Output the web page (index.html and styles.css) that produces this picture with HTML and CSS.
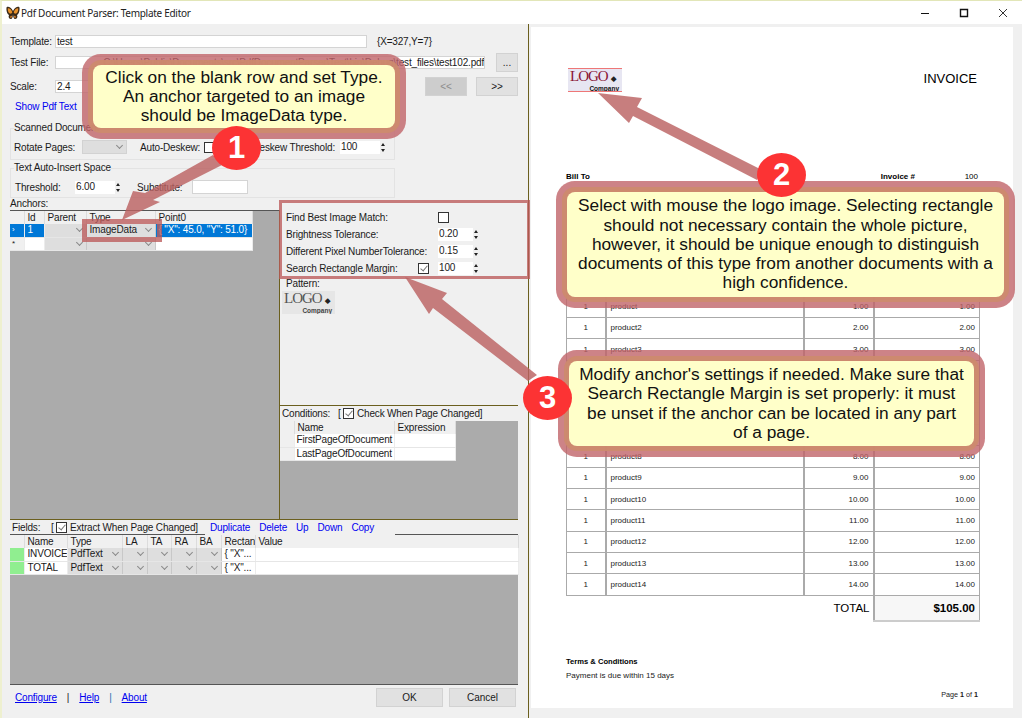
FILE: index.html
```html
<!DOCTYPE html>
<html lang="en">
  <head>
    <meta charset="UTF-8" />
    <title>Pdf Document Parser: Template Editor</title>
    <link rel="stylesheet" href="styles.css">
  </head>
  <body>
    <div class="window">
      <header class="titlebar">
        <svg class="app-icon" viewBox="0 0 14 14">
          <path d="M7 5C5 1 2 0 .6 1.2 0 4 1 8 3 9c-1 2 0 4 2 4 1 0 2-2 2-5 0 3 1 5 2 5 2 0 3-2 2-4 2-1 3-5 2.400-7.800C12 0 9 1 7 5z" fill="#3a2a18"/>
          <path d="M6.300 6C5 3 3 2 1.800 2.400 1.600 4.500 2.500 7 4 7.600 5 8 6 7.500 6.300 6zM7.700 6C9 3 11 2 12.200 2.400 12.400 4.500 11.500 7 10 7.600 9 8 8 7.500 7.700 6z" fill="#e8912a"/>
          <path d="M4.500 10c-.6 1-.3 2 .5 2 .5 0 1-1 1.100-2.200zM9.500 10c.6 1 .3 2-.5 2-.5 0-1-1-1.100-2.200z" fill="#d9822b"/>
        </svg>
        <span class="title">Pdf Document Parser: Template Editor</span>
        <div class="win-buttons">
          <svg viewBox="0 0 10 10"><path d="M1 5.500h8" stroke="#111" fill="none"/></svg>
          <svg viewBox="0 0 10 10"><path d="M1.500 1.500h7v7h-7z" stroke="#111" stroke-width="1.400" fill="none"/></svg>
          <svg viewBox="0 0 10 10"><path d="M1 1l8 8M9 1l-8 8" stroke="#333" fill="none"/></svg>
        </div>
      </header>

      <div class="body">
        <section class="editor">
          <div class="row row-template">
            <span class="lbl">Template:</span>
            <div class="input input-template">test</div>
            <span class="coords">{X=327,Y=7}</span>
          </div>
          <div class="row row-tall">
            <span class="lbl">Test File:</span>
            <div class="input input-file">C:\Users\Public\Documents\src\PdfDocumentParser\Test\bin\Debug\test_files\test102.pdf</div>
            <button class="btn btn-browse">...</button>
          </div>
          <div class="row row-tall">
            <span class="lbl">Scale:</span>
            <div class="input input-scale">2.4</div>
            <button class="btn btn-nav btn-off">&lt;&lt;</button>
            <button class="btn btn-nav">&gt;&gt;</button>
          </div>
          <a class="link show-text">Show Pdf Text</a>

          <fieldset class="group group-scan">
            <legend>Scanned Document</legend>
            <div class="row">
              <span class="lbl-rotate">Rotate Pages:</span>
              <div class="combo combo-rotate"></div>
              <span class="lbl-deskew">Auto-Deskew:</span>
              <span class="chk"></span>
              <span class="lbl-threshold">Deskew Threshold:</span>
              <div class="num num-deskew"><span>100</span><i class="spin"></i></div>
            </div>
          </fieldset>
          <fieldset class="group group-space">
            <legend>Text Auto-Insert Space</legend>
            <div class="row">
              <span class="lbl-space">Threshold:</span>
              <div class="num num-space"><span>6.00</span><i class="spin"></i></div>
              <span class="lbl-subst">Substitute:</span>
              <div class="input input-subst"></div>
            </div>
          </fieldset>

          <div class="anchors-label">Anchors:</div>
          <div class="split">
            <div class="pane-anchors">
              <table class="grid grid-anchors">
                <tr>
                  <th class="c-head"></th><th class="c-id">Id</th><th class="c-parent">Parent</th><th class="c-type">Type</th><th class="c-point">Point0</th>
                </tr>
                <tr class="selected">
                  <td class="rowhead">&#8250;</td><td>1</td><td class="cell-combo"></td><td class="cell-combo">ImageData</td><td>{ "X": 45.0, "Y": 51.0}</td>
                </tr>
                <tr>
                  <td class="rowhead">*</td><td></td><td class="cell-combo"></td><td class="cell-combo"></td><td></td>
                </tr>
              </table>
            </div>
            <div class="pane-side">
              <div class="settings">
                <div class="row row-set"><span class="lbl-set">Find Best Image Match:</span><span class="chk"></span></div>
                <div class="row row-set"><span class="lbl-set">Brightness Tolerance:</span><div class="num num-set"><span>0.20</span><i class="spin"></i></div></div>
                <div class="row row-set"><span class="lbl-set">Different Pixel NumberTolerance:</span><div class="num num-set"><span>0.15</span><i class="spin"></i></div></div>
                <div class="row row-set"><span class="lbl-margin">Search Rectangle Margin:</span><span class="chk chk-on chk-margin"></span><div class="num num-set"><span>100</span><i class="spin"></i></div></div>
                <div class="pattern-label">Pattern:</div>
                <div class="logo logo-pattern"><span class="logo-word">LOGO<b>&#9670;</b></span><span class="logo-sub">Company</span></div>
              </div>
              <div class="conditions">
                <div class="row cond-head">
                  <span class="lbl-cond">Conditions:</span><span class="bracket">[</span><span class="chk chk-on"></span><span class="cond-check">Check When Page Changed]</span>
                </div>
                <div class="cond-body">
                  <table class="grid grid-cond">
                    <tr><th class="c-head"></th><th class="c-cname">Name</th><th class="c-expr">Expression</th></tr>
                    <tr><td class="rowhead"></td><td class="tight">FirstPageOfDocument</td><td></td></tr>
                    <tr><td class="rowhead"></td><td class="tight">LastPageOfDocument</td><td></td></tr>
                  </table>
                </div>
              </div>
            </div>
          </div>

          <div class="row fields-head">
            <span class="lbl-fields">Fields:</span><span class="bracket">[</span><span class="chk chk-on"></span><span class="fields-check">Extract When Page Changed]</span>
            <div class="fields-links">
              <a class="link">Duplicate</a><a class="link">Delete</a><a class="link">Up</a><a class="link">Down</a><a class="link">Copy</a>
            </div>
          </div>
          <div class="fields-body">
            <table class="grid grid-fields">
              <tr>
                <th class="c-head"></th><th class="c-fname">Name</th><th class="c-ftype">Type</th><th class="c-la">LA</th><th class="c-ta">TA</th><th class="c-ra">RA</th><th class="c-ba">BA</th><th class="c-rect">Rectan</th><th class="c-value">Value</th>
              </tr>
              <tr>
                <td class="rowhead green"></td><td>INVOICE</td><td class="cell-combo">PdfText</td><td class="cell-combo"></td><td class="cell-combo"></td><td class="cell-combo"></td><td class="cell-combo"></td><td>{ "X"...</td><td></td>
              </tr>
              <tr>
                <td class="rowhead green"></td><td>TOTAL</td><td class="cell-combo">PdfText</td><td class="cell-combo"></td><td class="cell-combo"></td><td class="cell-combo"></td><td class="cell-combo"></td><td>{ "X"...</td><td></td>
              </tr>
            </table>
          </div>

          <footer class="footer">
            <a class="link under">Configure</a><span class="sep">|</span><a class="link under">Help</a><span class="sep sep-blue">|</span><a class="link under">About</a>
            <button class="btn btn-ok">OK</button>
            <button class="btn btn-cancel">Cancel</button>
          </footer>
        </section>

        <section class="viewer">
          <div class="page">
            <div class="doc-top">
              <div class="logo logo-doc"><span class="logo-word">LOGO<b>&#9670;</b></span><span class="logo-sub">Company</span></div>
              <div class="doc-title">INVOICE</div>
            </div>
            <div class="bill-row">
              <b>Bill To</b>
              <b class="inv-label">Invoice #</b>
              <span class="inv-value">100</span>
            </div>
            <table class="items">
              <tr class="items-head"><td class="q">Qty</td><td>Description</td><td class="m">Price</td><td class="m">Amount</td></tr>
              <tr><td class="q">1</td><td>product</td><td class="m">1.00</td><td class="m">1.00</td></tr>
              <tr><td class="q">1</td><td>product2</td><td class="m">2.00</td><td class="m">2.00</td></tr>
              <tr><td class="q">1</td><td>product3</td><td class="m">3.00</td><td class="m">3.00</td></tr>
              <tr><td class="q">1</td><td>product4</td><td class="m">4.00</td><td class="m">4.00</td></tr>
              <tr><td class="q">1</td><td>product5</td><td class="m">5.00</td><td class="m">5.00</td></tr>
              <tr><td class="q">1</td><td>product6</td><td class="m">6.00</td><td class="m">6.00</td></tr>
              <tr><td class="q">1</td><td>product7</td><td class="m">7.00</td><td class="m">7.00</td></tr>
              <tr><td class="q">1</td><td>product8</td><td class="m">8.00</td><td class="m">8.00</td></tr>
              <tr><td class="q">1</td><td>product9</td><td class="m">9.00</td><td class="m">9.00</td></tr>
              <tr><td class="q">1</td><td>product10</td><td class="m">10.00</td><td class="m">10.00</td></tr>
              <tr><td class="q">1</td><td>product11</td><td class="m">11.00</td><td class="m">11.00</td></tr>
              <tr><td class="q">1</td><td>product12</td><td class="m">12.00</td><td class="m">12.00</td></tr>
              <tr><td class="q">1</td><td>product13</td><td class="m">13.00</td><td class="m">13.00</td></tr>
              <tr><td class="q">1</td><td>product14</td><td class="m">14.00</td><td class="m">14.00</td></tr>
              <tr class="items-total"><td colspan="3" class="total-label">TOTAL</td><td class="total-value">$105.00</td></tr>
            </table>
            <div class="terms">Terms &amp; Conditions</div>
            <div class="payment">Payment is due within 15 days</div>
            <div class="page-no">Page <b>1</b> of <b>1</b></div>
          </div>
        </section>
      </div>

      <!-- tutorial marks drawn over the screenshot -->
      <div class="notes">
        <svg class="marks" viewBox="0 0 1022 718">
          <rect class="mark-box mark-type" x="84.500" y="221.500" width="75" height="18"/>
          <rect class="mark-box" x="280.500" y="201.500" width="248" height="76"/>
          <polygon class="mark-arrow" points="122,220 133,191 145,193 213,155 222,165 153,200 160,202"/>
          <polygon class="mark-arrow" points="598,93 642,98 637,107 762,170 757,180 633,116 629,123"/>
          <polygon class="mark-arrow" points="405,277 447,293 442,299 537,375 528,381 433,308 429,314"/>
        </svg>
        <div class="callout callout-1">Click on the blank row and set Type.<br>An anchor targeted to an image<br>should be ImageData type.</div>
        <div class="callout callout-2">Select with mouse the logo image. Selecting rectangle<br>should not necessary contain the whole picture,<br>however, it should be unique enough to distinguish<br>documents of this type from another documents with a<br>high confidence.</div>
        <div class="callout callout-3">Modify anchor's settings if needed. Make sure that<br>Search Rectangle Margin is set properly: it must<br>be unset if the anchor can be located in any part<br>of a page.</div>
        <div class="badge badge-1">1</div>
        <div class="badge badge-2">2</div>
        <div class="badge badge-3">3</div>
      </div>
    </div>
  </body>
</html>
```

FILE: styles.css
```css
html,
body {
  margin: 0;
  height: 100%;
}
body {
  font-family: "Liberation Sans", Arial, sans-serif;
  font-size: 10px;
  letter-spacing: -.17px;
  color: #1a1a1a;
  background: #f0f0f0;
  white-space: nowrap;
}
.window {
  position: relative;
  display: flex;
  flex-direction: column;
  width: 1022px;
  height: 718px;
  box-sizing: border-box;
  border-top: 1px solid #e2e6b8;
  border-left: 2px solid #eef0cf;
  overflow: hidden;
}

/* title bar */
.titlebar {
  display: flex;
  align-items: center;
  flex: none;
  height: 23px;
  background: #fff;
}
.app-icon {
  width: 14px;
  height: 14px;
  margin-left: 4px;
}
.title {
  margin-left: 1px;
  font-family: "Noto Sans", sans-serif;
  font-size: 10px;
  letter-spacing: -.28px;
  color: #222;
}
.win-buttons {
  display: flex;
  gap: 29px;
  margin-left: auto;
  margin-right: 14px;
}
.win-buttons svg {
  width: 10px;
  height: 10px;
}

.body {
  display: flex;
  flex: 1;
  min-height: 0;
}

/* left side */
.editor {
  flex: none;
  width: 508px;
  padding: 11px 10px 0 8px;
  border-right: 1px solid #6b5f1e;
}
.row {
  display: flex;
  align-items: center;
}
.row-template {
  height: 13px;
}
.row-tall {
  height: 19px;
  margin-top: 5px;
}
.lbl {
  flex: none;
  width: 45px;
}
.input {
  box-sizing: border-box;
  height: 13px;
  padding-left: 1px;
  line-height: 12px;
  background: #fff;
  border: 1px solid #d4d4d4;
  overflow: hidden;
}
.input-template {
  width: 312px;
}
.coords {
  margin-left: 10px;
}
.input-file {
  width: 431px;
  text-align: right;
}
.input-scale {
  width: 100px;
}
.btn {
  box-sizing: border-box;
  padding: 0;
  font-family: inherit;
  font-size: 10px;
  color: #1a1a1a;
  background: #e1e1e1;
  border: 1px solid #d2d2d2;
}
.btn-browse {
  width: 22px;
  height: 19px;
  margin-left: 11px;
}
.btn-nav {
  width: 42px;
  height: 19px;
  margin-left: 9px;
}
.btn-nav.btn-off {
  margin-left: auto;
  color: #8c8c8c;
  background: #cdcdcd;
}
.link {
  color: #0000f0;
}
.show-text {
  display: block;
  margin: 5px 0 0 5px;
  line-height: 12px;
}

.group {
  box-sizing: border-box;
  width: 385px;
  margin: 9px 0 0;
  padding: 0;
  border: 1px solid #e3e3e3;
  min-inline-size: 0;
}
.group legend {
  margin-left: 3px;
  padding: 0;
  line-height: 12px;
}
.group .row {
  height: 14px;
  margin-top: 6px;
}
.group-scan {
  height: 38px;
}
.group-space {
  height: 36px;
  margin-top: 2px;
}
.lbl-rotate {
  width: 71px;
  padding-left: 3px;
  box-sizing: border-box;
  flex: none;
}
.combo {
  position: relative;
  flex: none;
  box-sizing: border-box;
  width: 45px;
  height: 14px;
  background: #dedede;
  border: 1px solid #d2d2d2;
}
.combo::after,
.cell-combo::after {
  content: "";
  position: absolute;
  top: 50%;
  right: 4px;
  width: 4px;
  height: 4px;
  margin-top: -4px;
  border-right: 1px solid #8a8a8a;
  border-bottom: 1px solid #8a8a8a;
  transform: rotate(45deg);
}
.lbl-deskew {
  flex: none;
  width: 64px;
  margin-left: 13px;
}
.lbl-threshold {
  flex: none;
  width: 120px;
  text-align: right;
}
.lbl-space {
  flex: none;
  box-sizing: border-box;
  width: 64px;
  padding-left: 4px;
}
.lbl-subst {
  flex: none;
  width: 55px;
  margin-left: 15px;
}
.input-subst {
  width: 56px;
  height: 14px;
}
.num {
  display: flex;
  flex: none;
  align-items: center;
  justify-content: space-between;
  height: 13px;
  padding-left: 1px;
  line-height: 12px;
  background: #fff;
}
.num-deskew {
  width: 46px;
  margin-left: 5px;
}
.num-space {
  width: 46px;
}
.num-set {
  width: 41px;
}
.spin {
  position: relative;
  flex: none;
  width: 7px;
  height: 13px;
  background: #f0f0f0;
}
.spin::before,
.spin::after {
  content: "";
  position: absolute;
  left: 1px;
  border-left: 2.500px solid transparent;
  border-right: 2.500px solid transparent;
}
.spin::before {
  top: 2px;
  border-bottom: 3px solid #222;
}
.spin::after {
  bottom: 2px;
  border-top: 3px solid #222;
}
.chk {
  position: relative;
  flex: none;
  box-sizing: border-box;
  width: 11px;
  height: 11px;
  background: #fff;
  border: 1px solid #333;
}
.chk-on::after {
  content: "";
  position: absolute;
  left: 3px;
  top: 0;
  width: 3px;
  height: 6px;
  border-right: 1px solid #777;
  border-bottom: 1px solid #777;
  transform: rotate(40deg);
}

.anchors-label {
  height: 12px;
  line-height: 12px;
}
.split {
  display: flex;
  height: 310px;
  box-sizing: border-box;
  border-bottom: 1px solid #6b5f1e;
}
.pane-anchors {
  flex: none;
  width: 270px;
  box-sizing: border-box;
  background: #ababab;
  border-top: 1px solid #555;
  border-right: 1px solid #6b5f1e;
}
.pane-side {
  display: flex;
  flex: 1;
  flex-direction: column;
}

/* grids */
.grid {
  border-collapse: collapse;
  table-layout: fixed;
  font-size: 10px;
}
.grid th,
.grid td {
  position: relative;
  box-sizing: border-box;
  height: 13px;
  padding: 0 0 0 3px;
  font-weight: 400;
  line-height: 12px;
  text-align: left;
  overflow: hidden;
}
.grid th {
  background: #f0f0f0;
  border-right: 1px solid #dcdcdc;
}
.grid td {
  background: #fff;
  border-right: 1px solid #ececec;
  border-bottom: 1px solid #e6e6e6;
}
.grid .rowhead {
  padding: 0 0 0 2px;
  font-size: 8px;
  background: #f0f0f0;
}
.grid .cell-combo {
  background: #dedede;
  border-right: 1px solid #c8c8c8;
}
.grid .green {
  background: #90ee90;
}
.grid .tight {
  padding-left: 2px;
}
.grid-anchors {
  width: 242px;
}
.c-head {
  width: 14px;
}
.c-id {
  width: 20px;
}
.c-parent {
  width: 42px;
}
.c-type {
  width: 69px;
}
.c-point {
  width: 97px;
}
.selected td,
.grid .selected .rowhead {
  color: #fff;
  background: #0078d7;
}
.grid .selected .cell-combo {
  color: #1a1a1a;
  background: #dedede;
}

.settings {
  flex: none;
  box-sizing: border-box;
  height: 196px;
  padding-left: 6px;
  border-bottom: 1px solid #6b5f1e;
}
.row-set {
  height: 14px;
  margin-bottom: 3px;
}
.lbl-set {
  flex: none;
  width: 152px;
}
.lbl-margin {
  flex: none;
  width: 132px;
}
.chk-margin {
  margin-right: 9px;
}
.pattern-label {
  height: 12px;
  line-height: 12px;
}
.logo {
  display: flex;
  flex-direction: column;
  box-sizing: border-box;
  width: 53px;
  height: 23px;
  overflow: hidden;
}
.logo-word {
  font-family: "Liberation Serif", serif;
  letter-spacing: -1px;
  line-height: 15px;
}
.logo-word b {
  margin-left: 3px;
  font-size: 7px;
  color: #222;
}
.logo-sub {
  margin-top: -2px;
  padding-right: 3px;
  font-size: 6.500px;
  font-weight: 700;
  letter-spacing: 0;
  line-height: 7px;
  text-align: right;
}
.logo-pattern {
  margin: 1px 0 0 -4px;
  padding-left: 2px;
  font-size: 15px;
  color: #555;
  background: #e6e6e6;
}
.logo-pattern .logo-sub {
  color: #444;
}
.conditions {
  display: flex;
  flex: 1;
  flex-direction: column;
}
.cond-head {
  flex: none;
  height: 15px;
  padding-left: 2px;
}
.lbl-cond {
  flex: none;
  width: 56px;
}
.bracket {
  flex: none;
  width: 5px;
}
.cond-check {
  margin-left: 3px;
}
.cond-body {
  flex: 1;
  background: #ababab;
}
.grid-cond {
  width: 175px;
}
.c-cname {
  width: 100px;
}
.c-expr {
  width: 61px;
}

.fields-head {
  position: relative;
  height: 15px;
  margin-bottom: -1px;
  padding-left: 2px;
}
.lbl-fields {
  flex: none;
  width: 39px;
}
.fields-check {
  flex: none;
  width: 126px;
  margin-left: 3px;
}
.fields-links {
  display: flex;
  gap: 9px;
  align-self: stretch;
  align-items: center;
  width: 190px;
  margin-left: 9px;
  padding-left: 5px;
  box-sizing: border-box;
  background: #f0f0f0;
}
.fields-body {
  height: 151px;
  box-sizing: border-box;
  background: #ababab;
  border-top: 1px solid #555;
  border-bottom: 1px solid #555;
}
.grid-fields {
  width: 508px;
}
.c-fname {
  width: 43px;
}
.c-ftype {
  width: 55px;
}
.c-la,
.c-ra,
.c-ba {
  width: 25px;
}
.c-ta {
  width: 24px;
}
.c-rect {
  width: 34px;
}
.c-value {
  width: 263px;
}

.footer {
  display: flex;
  align-items: center;
  height: 24px;
  padding-left: 5px;
}
.under {
  text-decoration: underline;
}
.sep {
  margin: 0 10px;
}
.sep-blue {
  color: #2a6fb0;
}
.btn-ok,
.btn-cancel {
  width: 67px;
  height: 19px;
}
.btn-ok {
  margin-left: auto;
}
.btn-cancel {
  margin: 0 2px 0 6px;
}

/* pdf preview */
.viewer {
  flex: 1;
  padding: 3px 9px 10px 2px;
}
.page {
  box-sizing: border-box;
  height: 681px;
  padding: 41px 33px 0 35px;
  background: #fff;
  font-size: 8px;
  letter-spacing: 0;
}
.doc-top {
  display: flex;
  align-items: flex-start;
  justify-content: space-between;
}
.logo-doc {
  width: 54px;
  height: 24px;
  margin-left: 2px;
  padding-left: 2px;
  font-size: 15px;
  color: #8a1434;
  background: #e7e6f2;
  border-top: 1px solid #e77;
  border-bottom: 1px solid #e77;
}
.logo-doc .logo-sub {
  color: #111;
}
.doc-title {
  margin-top: 3px;
  margin-right: 3px;
  font-size: 13px;
  line-height: 15px;
  color: #000;
}
.bill-row {
  display: flex;
  margin-top: 79px;
  line-height: 11px;
  color: #000;
}
.inv-label {
  margin-left: auto;
}
.inv-value {
  width: 65px;
  padding-right: 2px;
  box-sizing: border-box;
  text-align: right;
}
.items {
  width: 414px;
  margin-top: 92px;
  border-collapse: collapse;
  table-layout: fixed;
  color: #222;
}
.items td {
  height: 21.400px;
  padding: 0 4px;
  border: 1px solid #aaa;
  border-left-width: 1px;
  box-sizing: border-box;
}
.items .q {
  width: 39px;
  text-align: center;
}
.items .m {
  width: 70px;
  text-align: right;
}
.items tr td:nth-child(4) {
  width: 106px;
}
.items tr td:nth-child(2),
.items tr td:nth-child(3),
.items tr td:nth-child(4) {
  border-left-width: 2px;
}
.items .total-label {
  height: 26px;
  padding-right: 3px;
  font-size: 11.500px;
  text-align: right;
  color: #000;
  border-left-color: transparent;
  border-bottom-color: transparent;
}
.items-total .total-value {
  font-size: 11.500px;
  font-weight: 700;
  text-align: right;
  color: #000;
  background: #f7f7f7;
  border-bottom: 2px solid #ccc;
}
.terms {
  margin-top: 34px;
  font-size: 7.600px;
  font-weight: 700;
  line-height: 11px;
  color: #000;
}
.payment {
  margin-top: 3px;
  line-height: 11px;
}
.page-no {
  margin-top: 8px;
  margin-right: 2px;
  font-size: 7.200px;
  line-height: 11px;
  text-align: right;
}

/* overlay */
.notes {
  position: absolute;
  left: -2px;
  top: -1px;
  width: 1022px;
  height: 718px;
  letter-spacing: 0;
}
.marks {
  position: absolute;
  left: 0;
  top: 0;
  width: 1022px;
  height: 718px;
}
.mark-box {
  fill: none;
  stroke: rgba(187, 90, 90, .78);
  stroke-width: 3;
}
.mark-type {
  stroke-width: 5;
}
.mark-arrow {
  fill: rgba(187, 97, 97, .82);
}
.callout {
  position: absolute;
  display: flex;
  align-items: center;
  justify-content: center;
  box-sizing: border-box;
  font-size: 17.300px;
  line-height: 19.200px;
  text-align: center;
  color: #111;
  background: #ffffc9;
  border-radius: 8px;
  box-shadow: 0 0 0 5px rgba(204, 138, 110, .95), 0 0 0 11px rgba(192, 100, 105, .8);
}
.callout-1 {
  left: 93px;
  top: 65px;
  width: 302px;
  height: 63px;
}
.callout-2 {
  left: 567px;
  top: 192px;
  width: 437px;
  height: 105px;
}
.callout-3 {
  left: 569px;
  top: 361px;
  width: 405px;
  height: 85px;
}
.badge {
  position: absolute;
  font-size: 31px;
  font-weight: 700;
  line-height: 44px;
  text-align: center;
  color: #fff;
  background: #fc3334;
  border-radius: 50%;
  width: 49px;
  height: 44px;
}
.badge-1 {
  left: 212px;
  top: 126px;
}
.badge-2 {
  left: 757px;
  top: 153px;
}
.badge-3 {
  left: 523px;
  top: 376px;
}
```
